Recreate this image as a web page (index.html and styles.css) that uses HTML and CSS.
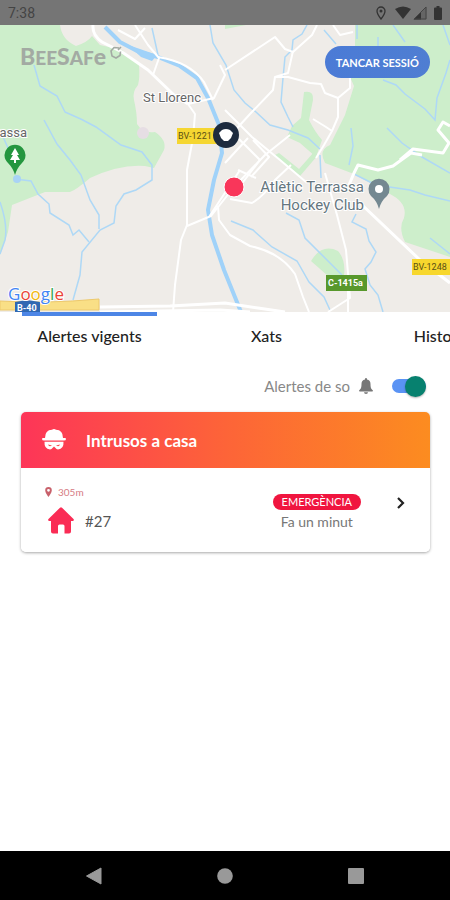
FILE: index.html
```html
<!DOCTYPE html>
<html lang="ca">
<head>
  <meta charset="UTF-8" />
  <meta name="viewport" content="width=device-width, initial-scale=1" />
  <title>BeeSafe</title>
  <link rel="stylesheet" href="styles.css">
</head>
<body>

<div class="status-bar">
  <span class="clock">7:38</span>
  <div class="status-icons">
    <svg class="status-pin" width="10" height="14" viewBox="0 0 10 14"><path d="M5 1a4 4 0 0 0-4 4c0 3 4 8 4 8s4-5 4-8a4 4 0 0 0-4-4z" fill="none" stroke="#333" stroke-width="1.3"/><circle cx="5" cy="5" r="1.5" fill="#333"/></svg>
    <svg width="16" height="14" viewBox="0 0 16 14"><path d="M0 3Q8-2 16 3L8 13z" fill="#333"/></svg>
    <svg width="14" height="14" viewBox="0 0 14 14"><path d="M13.500.5V13.500H.5z" fill="#555" opacity=".5"/><path d="M8 6v7.500H.5z" fill="#333"/><path d="M13 1v12H1z" fill="none" stroke="#444"/></svg>
    <svg class="status-battery" width="8" height="14" viewBox="0 0 8 14"><path d="M2.500 0h3v1.500H7a1 1 0 0 1 1 1V13a1 1 0 0 1-1 1H1a1 1 0 0 1-1-1V2.500a1 1 0 0 1 1-1h1.500z" fill="#333"/></svg>
  </div>
</div>

<div class="map">
  <svg class="map-canvas" viewBox="0 25 450 287" preserveAspectRatio="xMidYMid slice">
    <rect y="25" width="450" height="287" fill="#efece8"/>

    <!-- parks -->
    <g fill="#cdeecb">
      <path d="M0 25H60Q62 40 76 46Q88 42 92 36L100 45L122 50L139 65Q140 78 138 85Q132 92 134 100Q137 113 137 124Q143 134 155 132Q167 140 164 150L154 168L145 166Q120 164 90 178Q76 190 70 192H45L12 205L8 232L0 255z"/>
      <path d="M355 25H450V257L405 242Q398 228 404 218Q408 203 390 194L354 174L325 163Q318 150 330 145L345 115L354 86L350 77L355 55z"/>
      <path d="M304 92Q314 90 313 100L309 120Q315 132 322 140L316 157L300 143L287 137L292 126L301 118z"/>
      <path d="M311 261Q322 243 338 251Q346 260 344 276H328z"/>
      <path d="M275 155L300 176L318 155L314 152L299 169L279 153z"/>
      <path d="M225 25H246L225 29z"/>
    </g>
    <circle cx="143" cy="133" r="6" fill="#e6dee4"/>

    <!-- streams -->
    <g class="stream">
      <path d="M34 65L40 86L57 96L65 112Q82 119 96 127L121 145L142 152L152 165L152 180L136 190L124 194L116 206L114 223L100 230L82 252L80 275L73 300"/>
      <path d="M44 120L57 144L70 160L81 175L90 200L99 215V229"/>
      <path d="M15 179L31 181L38 194L49 204L50 213L69 225L73 235L79 230L89 242"/>
      <path d="M0 130L8 148L15 165M0 202Q8 225 5 240L0 254"/>
      <path d="M152 28L158 55M210 25L213 43L226 65L234 90L245 103L256 112L270 125L288 130L308 138L320 149"/>
      <path d="M307 25L302 34L293 40L292 50L285 57L283 78L281 102L288 117L293 127"/>
      <path d="M324 30L336 44M357 25V39M378 37V50M393 25L405 42M443 25L450 45"/>
      <path d="M383 80L396 85L405 94L425 109L435 120L437 98L446 73L450 60"/>
      <path d="M351 128L353 146L349 165M387 128L402 143L422 157L450 173"/>
      <path d="M354 174L376 185L410 190L425 195L450 201"/>
      <path d="M320 155L321 178M286 213L299 220L305 238L325 258L342 275"/>
      <path d="M356 214L352 222L366 229L369 241L376 252L371 262L365 269L370 285L378 295L383 312"/>
      <path d="M231 221L253 230L272 247L297 261L309 282L324 297L330 310"/>
      <path d="M430 238L450 254"/>
    </g>
    <circle cx="17" cy="179" r="4" fill="#a9d3f5"/>

    <!-- river -->
    <path class="river" d="M105 27L120 42L139 52L158 57L180 66L197 78L208 98L219 125L222 153L214 180L208 210L212 235L224 270L241 312"/>
    <path d="M128 45L140 49L157 55L152 61L141 57z" fill="#a0d2f9"/>

    <!-- roads -->
    <g class="road">
      <path d="M135 25L148 45L159 58L153 75M118 30L135 39L145 28"/>
      <path d="M188 104L214 98L225 75L220 65M188 104L195 114L193 138L187 170V225L181 240L175 285L173 312"/>
      <path d="M187 226L211 216L234 187L265 155L290 135M209 217L240 170"/>
      <path d="M158 57Q190 62 204 82L213 100"/>
      <path d="M225 70L275 37L285 49L293 52L312 35L317 25M333 25L340 35L353 32"/>
      <path d="M293 51L288 73L275 77L273 90L250 114L230 136M275 77H288L310 83L321 84L325 93L338 98L350 88V78L340 70"/>
      <path d="M338 98V117L332 131L326 127L313 119M332 131L324 145L316 158"/>
      <path d="M225 110L252 137L280 160L306 182M225 125L260 160L240 186M248 138L225 163M253 140L269 157L251 177M238 170L256 178"/>
      <path d="M230 199L252 203Q264 196 275 180L291 165M218 206L219 220L230 235L250 246Q280 252 295 274L303 297L309 312"/>
      <path d="M325 173L337 215L346 250L349 285L350 298L328 312M348 280V312"/>
    </g>
    <g class="road wide">
      <path d="M93 25Q92 35 102 42L122 52L148 70L174 95L188 104"/>
      <path d="M349 185L354 173L358 165L378 170L393 166L411 153L422 155M400 160L413 149L443 153L449 143L438 130L443 122L450 126"/>
      <path d="M360 203L420 260L450 283"/>
      <path d="M100 307L170 306L225 303L258 308L285 312M100 312L220 310L250 312"/>
    </g>
    <path d="M0 301Q45 304 99 299V310H0z" fill="#f9df86" stroke="#edc96c"/>

    <!-- road signs -->
    <rect x="177" y="128" width="40" height="16" fill="#f5d631"/>
    <text class="sign" x="178" y="139">BV-1221</text>
    <rect x="412" y="259" width="38" height="16" fill="#f7d72d"/>
    <text class="sign" x="413" y="270">BV-1248</text>
    <rect x="326" y="275" width="41" height="16" fill="#58982c"/>
    <text class="sign sign-light" x="328" y="286">C-1415a</text>
    <path d="M15 302L27 300L40 302V312H15z" fill="#3068b2"/>
    <text class="sign sign-light" x="17" y="311">B-40</text>

    <!-- places -->
    <text class="place" x="143" y="102">St Llorenc</text>
    <text class="place" x="27" y="137" text-anchor="end">Terrassa</text>
    <text class="place poi" x="364" y="192" text-anchor="end">Atlètic Terrassa</text>
    <text class="place poi" x="364" y="210" text-anchor="end">Hockey Club</text>
    <path d="M15 175Q13 168 8 163A10.500 10.500 0 1 1 22 163Q17 168 15 175z" fill="#24963f"/>
    <path d="M15 148L11 155H13L10 160H14V163H16V160H20L17 155H19z" fill="#fff"/>
    <path d="M379 209Q377 201 371 196A10.500 10.500 0 1 1 387 196Q381 201 379 209z" fill="#748891"/>
    <circle cx="379" cy="189" r="4" fill="#fff"/>

    <!-- markers -->
    <circle cx="226" cy="135" r="13" fill="#1d2b3e"/>
    <path d="M219 133L222 130Q226 128 230 130L233 133L231 138L228 141H224L221 138z" fill="#fff"/>
    <circle cx="234" cy="187" r="10" fill="#f9365a" stroke="#fff"/>

    <text class="google" x="8" y="300"><tspan fill="#4285f4">G</tspan><tspan fill="#ea4335">o</tspan><tspan fill="#f2b70c">o</tspan><tspan fill="#4285f4">g</tspan><tspan fill="#34a853">l</tspan><tspan fill="#ea4335">e</tspan></text>
  </svg>

  <div class="map-header">
    <div class="logo">
      <span class="logo-text">B<span class="logo-caps">EE</span>S<span class="logo-caps">AF</span>e</span>
      <svg width="12" height="13" viewBox="0 0 12 13"><path d="M9 2L4 1.500L1 5L2 10L6 12L10 9.500L10.500 5.500M8 4L11 1" fill="none" stroke="#a3aaa3" stroke-width="1.600"/></svg>
    </div>
    <button class="logout">TANCAR SESSIÓ</button>
  </div>
</div>

<nav class="tabs">
  <a class="tab active" href="#alertes">Alertes vigents</a>
  <a class="tab" href="#xats">Xats</a>
  <a class="tab" href="#historial">Historial</a>
</nav>

<main class="content" id="alertes">
  <div class="sound">
    <label for="sound">Alertes de so</label>
    <svg width="14" height="16" viewBox="0 0 14 16"><path d="M7 0a1 1 0 0 1 1 1v.6A4.500 4.500 0 0 1 11.500 6c0 4 .8 5 2.200 6.200.6.600.2 1.300-.5 1.300H.8c-.7 0-1.100-.7-.5-1.300C1.700 11 2.500 10 2.500 6A4.500 4.500 0 0 1 6 1.600V1a1 1 0 0 1 1-1zM5 14.300h4a2 1.700 0 0 1-4 0z" fill="#777"/></svg>
    <input class="switch" type="checkbox" id="sound" checked />
  </div>

  <article class="card">
    <header class="card-header">
      <svg width="24" height="22" viewBox="0 0 24 22">
        <path d="M3 9Q3 1 10 .8Q12-.6 14 .8Q21 1 21 9H23Q24 9 24 10Q24 11.500 22 11.500H2Q0 11.500 0 10Q0 9 1 9z" fill="#fff"/>
        <path d="M2.500 12.800H21.500Q22 20 16 20.500Q14 20 12 17.500Q10 20 8 20.500Q2 20 2.500 12.800z" fill="#fff"/>
        <path d="M6 15.500L10 16.500Q7 18.500 6 15.500zM18 15.500L14 16.500Q17 18.500 18 15.500z" fill="#fb4950"/>
      </svg>
      <h2>Intrusos a casa</h2>
    </header>
    <div class="card-body">
      <div class="house">
        <div class="distance">
          <svg width="7" height="10" viewBox="0 0 7 10"><path d="M3.500 0A3.300 3.300 0 0 0 .2 3.300C.2 6 3.500 10 3.500 10S6.800 6 6.800 3.300A3.300 3.300 0 0 0 3.500 0zm0 1.900a1.400 1.400 0 1 1 0 2.800 1.400 1.400 0 0 1 0-2.800z" fill="#c8616b"/></svg>
          305m
        </div>
        <div class="house-id">
          <svg width="26" height="27" viewBox="0 0 26 27"><path d="M12 .7Q13-.3 14 .7L25.500 12Q26.500 13.500 25 14H23V24.500Q23 26.500 21 26.500H16.500V19Q16.500 17.500 15 17.500H11.500Q10 17.500 10 19V26.500H5Q3 26.500 3 24.500V14H1Q-.5 13.500.5 12z" fill="#fa2c55"/></svg>
          #27
        </div>
      </div>
      <div class="state">
        <span class="badge">EMERGÈNCIA</span>
        <span class="time">Fa un minut</span>
      </div>
      <button class="open" aria-label="Obrir alerta">
        <svg width="8" height="12" viewBox="0 0 8 12"><path d="M1 1L6 6L1 11" fill="none" stroke="#222" stroke-width="2.200"/></svg>
      </button>
    </div>
  </article>
</main>

<div class="system-nav">
  <button aria-label="Enrere"><svg width="18" height="18" viewBox="0 0 18 18"><path d="M1.500 9L16 1V17z" fill="#999" stroke="#999" stroke-linejoin="round"/></svg></button>
  <button aria-label="Inici"><svg width="18" height="18" viewBox="0 0 18 18"><circle cx="9" cy="9" r="7.800" fill="#999"/></svg></button>
  <button aria-label="Recents"><svg width="18" height="18" viewBox="0 0 18 18"><rect x="1" y="1" width="16" height="16" rx="1" fill="#999"/></svg></button>
</div>

</body>
</html>
```
FILE: styles.css
```css
* {
  box-sizing: border-box;
}
body {
  margin: 0;
  min-height: 100vh;
  display: flex;
  flex-direction: column;
  background: #fff;
  font-family: Lato, sans-serif;
  color: #222;
  overflow-x: hidden;
}
svg {
  display: block;
  flex: none;
}
button {
  border: none;
  cursor: pointer;
  font-family: inherit;
}

.status-bar {
  height: 25px;
  padding: 0 8px;
  display: flex;
  align-items: center;
  justify-content: space-between;
  background: #757575;
  color: #444;
  font-family: Roboto, sans-serif;
  font-size: 14px;
}
.status-icons {
  display: flex;
  gap: 2px;
}
.status-pin {
  margin-right: 7px;
}
.status-battery {
  margin-left: 5px;
}

/* map */
.map {
  position: relative;
  height: 287px;
}
.map-canvas {
  width: 100%;
  height: 100%;
}
.stream {
  fill: none;
  stroke: #aed8f6;
  stroke-width: 1.5;
}
.river {
  fill: none;
  stroke: #a0d2f9;
  stroke-width: 4;
  stroke-linejoin: round;
}
.road {
  fill: none;
  stroke: #fff;
  stroke-width: 2;
  stroke-linejoin: round;
}
.road.wide {
  stroke-width: 3;
}
.sign {
  font: 9px Roboto, sans-serif;
  fill: #5b5115;
}
.sign-light {
  font-weight: bold;
  fill: #fff;
}
.place {
  font: 13px Roboto, sans-serif;
  fill: #666;
  stroke: #fff;
  stroke-width: 2;
  paint-order: stroke;
}
.poi {
  font-size: 15px;
  fill: #65767f;
}
.google {
  font: 17px "Open Sans", sans-serif;
  stroke: #fff;
  stroke-width: 2;
  paint-order: stroke;
}
.map-header {
  position: absolute;
  top: 0;
  left: 0;
  right: 0;
  padding: 21px 20px 0;
  display: flex;
  justify-content: space-between;
}
.logo {
  display: flex;
  gap: 4px;
  color: #a3aaa3;
}
.logo-text {
  font-size: 23px;
  line-height: 20px;
  font-weight: 900;
}
.logo-caps {
  font-size: 19px;
}
.logout {
  height: 32px;
  padding: 0 11px;
  border-radius: 16px;
  background: linear-gradient(90deg, #4b7bd6, #4f7ed2);
  color: #fff;
  font-size: 11px;
  font-weight: bold;
}

/* tabs */
.tabs {
  display: flex;
  gap: 42px;
  padding: 0 22px;
  overflow: hidden;
}
.tab {
  flex: none;
  width: 135px;
  padding: 10px 0 14px;
  border-top: 4px solid transparent;
  color: #222;
  font-size: 16px;
  line-height: 20px;
  font-weight: 500;
  text-align: center;
  text-decoration: none;
}
.tab.active {
  border-top-color: #4d86e6;
}

.content {
  flex: 1;
  padding: 14px 20px 20px;
}
.sound {
  display: flex;
  align-items: center;
  justify-content: flex-end;
  gap: 9px;
  height: 24px;
  padding-right: 4px;
  color: #888;
  font-size: 15px;
}
.switch {
  appearance: none;
  width: 34px;
  height: 14px;
  margin: 0 0 0 10px;
  display: flex;
  align-items: center;
  background: #bbb;
  border-radius: 7px;
  cursor: pointer;
}
.switch::before {
  content: "";
  flex: none;
  width: 21px;
  height: 21px;
  border-radius: 50%;
  background: #999;
}
.switch:checked {
  background: #5a93f4;
}
.switch:checked::before {
  margin-left: auto;
  background: #07816f;
  box-shadow: 0 1px 2px rgba(0,0,0,0.3);
}

/* alert card */
.card {
  margin: 14px 0 0 1px;
  border-radius: 5px;
  box-shadow: 0 1px 3px rgba(0,0,0,0.35);
  overflow: hidden;
}
.card-header {
  height: 56px;
  padding: 0 21px;
  display: flex;
  align-items: center;
  gap: 20px;
  background: linear-gradient(90deg, #fd3558, #fd6438 50%, #fc8c20);
  color: #fff;
}
.card-header h2 {
  margin: 0;
  font-size: 17px;
  font-weight: bold;
}
.card-body {
  display: flex;
  align-items: center;
  padding: 17px 21px 18px 24px;
  background: #fff;
}
.house {
  flex: 1;
}
.distance {
  display: flex;
  align-items: center;
  gap: 6px;
  color: #d67b83;
  font-size: 10px;
  line-height: 14px;
}
.house-id {
  display: flex;
  align-items: center;
  gap: 11px;
  padding: 8px 0 0 3px;
  color: #555;
  font-size: 15px;
}
.state {
  display: flex;
  flex-direction: column;
  align-items: center;
  gap: 4px;
  padding-top: 4px;
}
.badge {
  padding: 0 9px;
  border-radius: 8px;
  background: #f0153f;
  color: #fff;
  font-size: 11px;
  line-height: 16px;
}
.time {
  color: #777;
  font-size: 14px;
  line-height: 16px;
}
.open {
  margin-left: 36px;
  padding: 0 4px 14px 0;
  background: none;
}

.system-nav {
  height: 49px;
  padding: 0 29px;
  display: flex;
  background: #000;
}
.system-nav button {
  flex: 1;
  display: flex;
  align-items: center;
  justify-content: center;
  background: none;
}
```
